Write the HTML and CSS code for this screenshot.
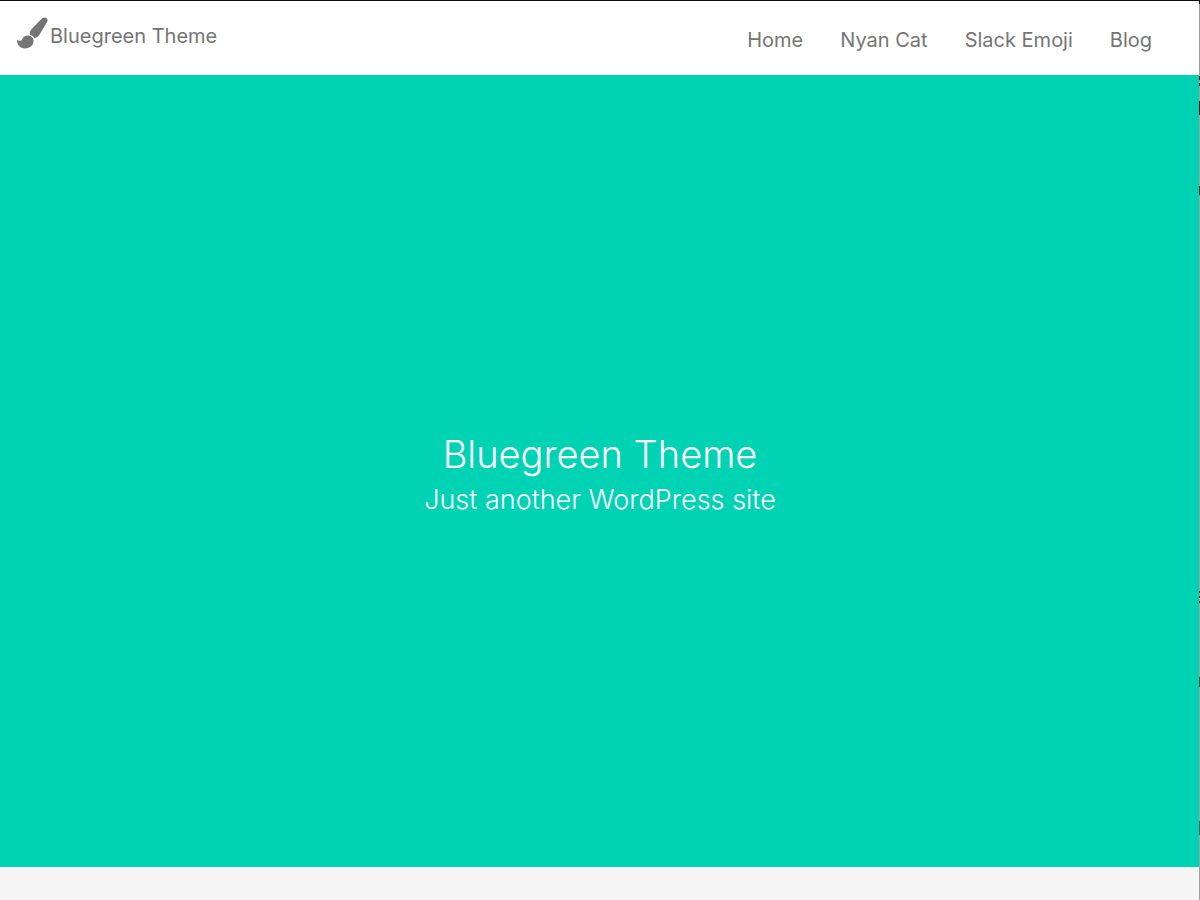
FILE: index.html
```html
<!DOCTYPE html>
<html lang="en">
<head>
<meta charset="utf-8">
<meta name="viewport" content="width=device-width, initial-scale=1">
<title>Bluegreen Theme</title>
<link rel="stylesheet" href="styles.css">
</head>
<body>
<header class="site-header">
  <a class="brand" href="#">
    <svg class="brand-icon" viewBox="0 0 32 32" aria-hidden="true">
      <path d="M30.6 1.2C29 0 27 .4 25.6 1.8L16.4 11.2C14.2 13.4 13.4 15.6 13.8 17.8C15.8 18.4 17.6 19.6 18.4 21.2C20.8 20.8 22.8 19.2 24.2 16.6L31 5.2C31.9 3.6 31.8 2.2 30.6 1.2Z"/>
      <path d="M13 18.6C10 17.9 7.3 19.2 6.3 21.9C5.4 24.2 3.2 24.6 1 22.4C.9 27.8 4 31.4 9 31.4C14.2 31.4 18 27.8 17.5 23.2C17.3 21 15.3 19.1 13 18.6Z"/>
    </svg>
    <span>Bluegreen Theme</span>
  </a>
  <nav class="site-nav" aria-label="Primary">
    <a href="#">Home</a>
    <a href="#">Nyan Cat</a>
    <a href="#">Slack Emoji</a>
    <a href="#">Blog</a>
  </nav>
</header>
<main>
  <section class="hero">
    <h1 class="hero-title">Bluegreen Theme</h1>
    <p class="hero-tagline">Just another WordPress site</p>
  </section>
</main>
<div class="window-edge" aria-hidden="true"></div>
</body>
</html>
```

FILE: styles.css
```css
* {
  box-sizing: border-box;
}

body {
  margin: 0;
  min-height: 100vh;
  background: #f5f5f5;
  color: #757575;
  font-family: Inter, "Liberation Sans", sans-serif;
}

.site-header {
  display: flex;
  justify-content: space-between;
  align-items: flex-start;
  padding: 16px 48px 20px 16px;
  border-top: 1px solid #080818;
  background: #fff;
  font-size: 20px;
  line-height: 38px;
}

.brand {
  display: flex;
  align-items: flex-start;
  gap: 2px;
  color: inherit;
  text-decoration: none;
}

.brand-icon {
  width: 32px;
  height: 32px;
  fill: #757575;
}

.site-nav {
  display: flex;
  gap: 37px;
  padding-top: 8px;
  line-height: 30px;
}

.site-nav a {
  color: inherit;
  text-decoration: none;
}

.hero {
  display: flex;
  flex-direction: column;
  align-items: center;
  justify-content: center;
  height: 88vh;
  padding-top: 10px;
  background: #00d3b4;
  color: #fff;
  text-align: center;
}

.hero-title {
  margin: 0;
  font-size: 38px;
  font-weight: 300;
  line-height: 48px;
}

.hero-tagline {
  margin: 0;
  font-size: 27px;
  font-weight: 300;
  line-height: 44px;
}

.window-edge {
  position: absolute;
  top: 0;
  right: 0;
  width: 1px;
  height: 100vh;
  background:
    linear-gradient(#111, #111) 0 0 / 1px 4px no-repeat,
    linear-gradient(#111, #111) 0 76px / 1px 4px no-repeat,
    linear-gradient(#111, #111) 0 83px / 1px 3px no-repeat,
    linear-gradient(#111, #111) 0 101px / 1px 14px no-repeat,
    linear-gradient(#222, #222) 0 186px / 1px 9px no-repeat,
    linear-gradient(#111, #111) 0 591px / 1px 2px no-repeat,
    linear-gradient(#111, #111) 0 596px / 1px 2px no-repeat,
    linear-gradient(#111, #111) 0 601px / 1px 2px no-repeat,
    linear-gradient(#444, #444) 0 677px / 1px 10px no-repeat,
    linear-gradient(#555, #555) 0 821px / 1px 14px no-repeat,
    #a0a0a0;
}
```
